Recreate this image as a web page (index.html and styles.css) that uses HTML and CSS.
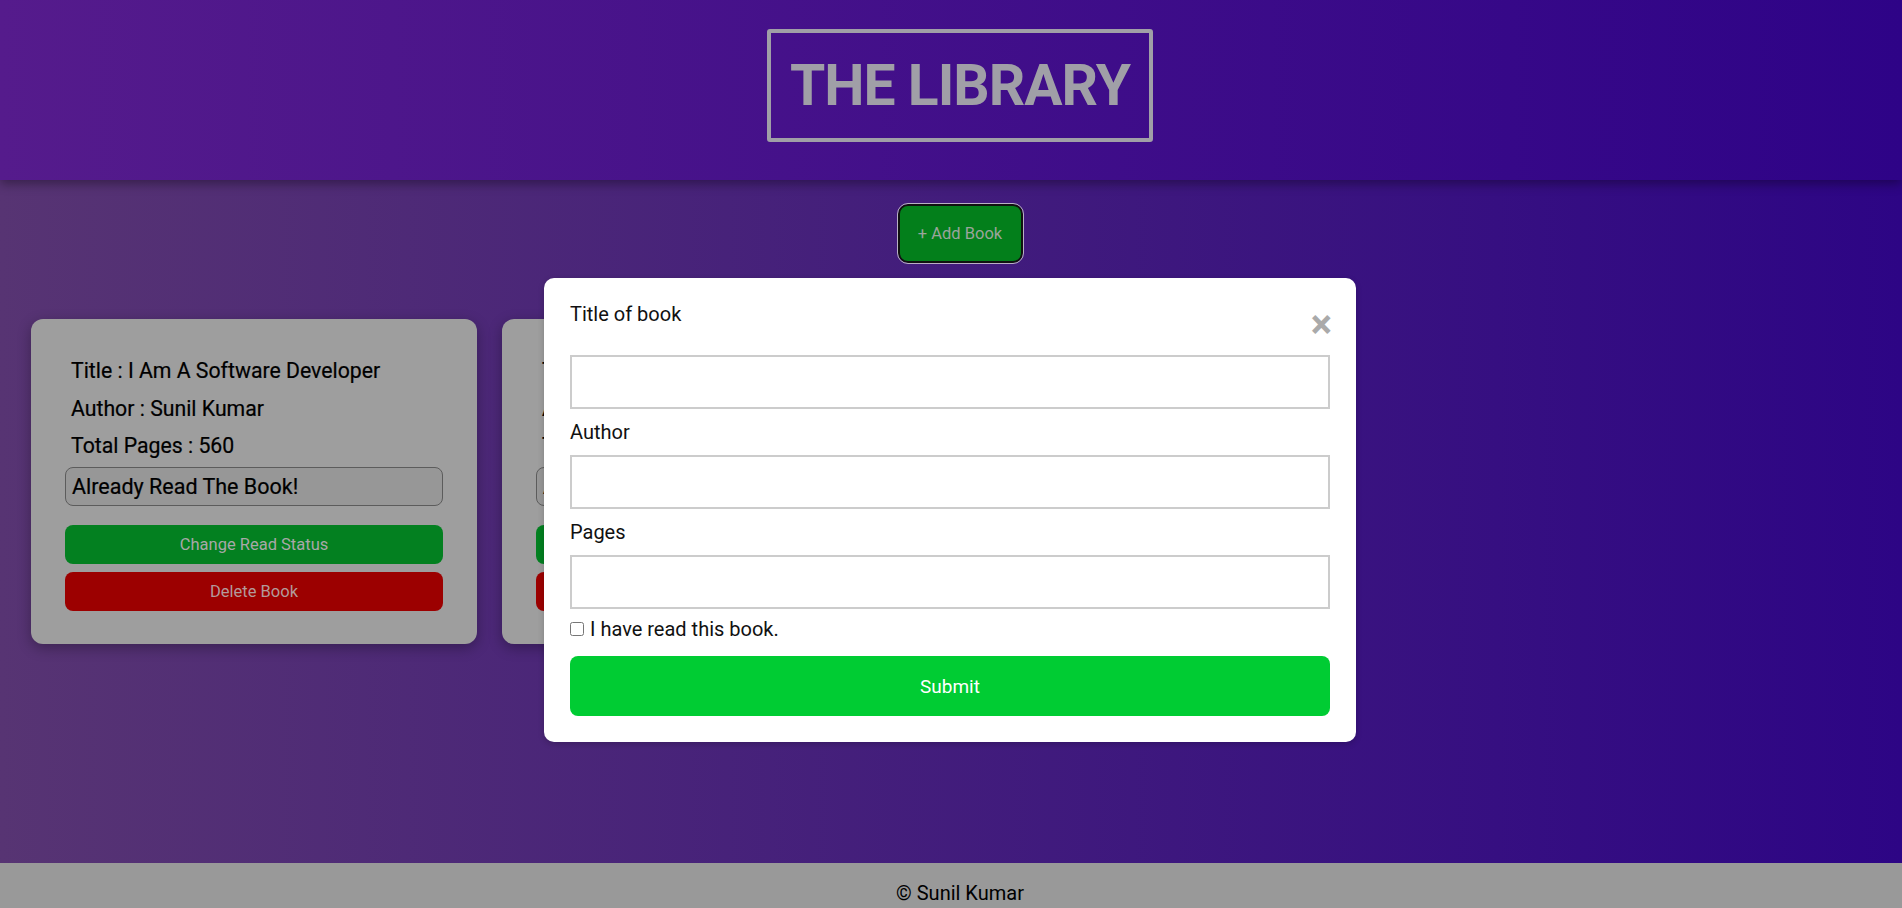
FILE: index.html
```html
<!DOCTYPE html>
<html lang="en">
<head>
<meta charset="utf-8">
<title>The Library</title>
<link rel="stylesheet" href="styles.css">
</head>
<body>
<header class="site-header">
  <h1 class="brand">THE LIBRARY</h1>
</header>
<main class="main">
  <div class="toolbar">
    <button class="add-btn">+ Add Book</button>
  </div>
  <section class="shelf">
    <article class="card">
      <p class="line">Title : I Am A Software Developer</p>
      <p class="line">Author : Sunil Kumar</p>
      <p class="line">Total Pages : 560</p>
      <div class="status">Already Read The Book!</div>
      <button class="btn btn-green">Change Read Status</button>
      <button class="btn btn-red">Delete Book</button>
    </article>
    <article class="card">
      <p class="line">Title : I Am A Software Developer</p>
      <p class="line">Author : Sunil Kumar</p>
      <p class="line">Total Pages : 560</p>
      <div class="status">Already Read The Book!</div>
      <button class="btn btn-green">Change Read Status</button>
      <button class="btn btn-red">Delete Book</button>
    </article>
  </section>
  <form class="modal">
    <div class="modal-head">
      <label class="field-label">Title of book</label>
      <span class="close">&times;</span>
    </div>
    <input class="field" type="text">
    <label class="field-label gap">Author</label>
    <input class="field" type="text">
    <label class="field-label gap">Pages</label>
    <input class="field" type="text">
    <label class="check-row"><input type="checkbox" class="check"> I have read this book.</label>
    <button type="button" class="submit">Submit</button>
  </form>
</main>
<footer class="site-footer">© Sunil Kumar</footer>
</body>
</html>
```

FILE: styles.css
```css
* { box-sizing: border-box; }
html, body { margin: 0; padding: 0; }
body {
  font-family: Roboto, "Liberation Sans", sans-serif;
  color: #000;
  background: #999;
}
.site-header {
  position: relative;
  z-index: 2;
  height: 180px;
  display: flex;
  align-items: flex-start;
  justify-content: center;
  padding-top: 29px;
  padding-left: 18px;
  background: linear-gradient(to right, #551b8c, #2e0387);
  box-shadow: 0 4px 10px rgba(0, 0, 0, 0.35);
}
.brand {
  margin: 0;
  width: 386px;
  height: 113px;
  border: 4px solid #a09fa7;
  border-radius: 3px;
  display: flex;
  align-items: center;
  justify-content: center;
  font-size: 57px;
  font-weight: 700;
  letter-spacing: -1px;
  color: #a09fa7;
}
.main {
  position: relative;
  height: 683px;
  background: linear-gradient(to right, #573473, #2d0585);
  padding-top: 24px;
}
.toolbar {
  display: flex;
  justify-content: center;
  padding-left: 18px;
}
.add-btn {
  width: 125px;
  height: 59px;
  background: #037f1b;
  border: 2px solid #111;
  outline: 1px solid #b9b0c4;
  border-radius: 10px;
  color: #9aa59b;
  font-family: Roboto, sans-serif;
  font-size: 16.5px;
}
.shelf {
  display: flex;
  gap: 25px;
  padding-left: 31px;
  margin-top: 56px;
}
.card {
  width: 446px;
  background: #9e9e9e;
  border-radius: 12px;
  padding: 33px 34px;
  box-shadow: 0 4px 14px rgba(0, 0, 0, 0.3);
  display: flex;
  flex-direction: column;
}
.line {
  margin: 0;
  padding-left: 6px;
  font-size: 21.25px;
  line-height: 37.5px;
  color: #000;
  -webkit-text-stroke: 0.2px #000;
}
.status {
  margin-top: 2px;
  height: 39px;
  border: 1px solid #5c5c5c;
  border-radius: 8px;
  padding-left: 6px;
  display: flex;
  align-items: center;
  font-size: 21.5px;
  background: #979797;
  color: #000;
  -webkit-text-stroke: 0.2px #000;
}
.btn {
  height: 39px;
  border: 0;
  border-radius: 8px;
  font-family: Roboto, sans-serif;
  font-size: 16.5px;
  color: #a8a8a8;
}
.btn-green { background: #038020; margin-top: 19px; }
.btn-red { background: #9c0000; margin-top: 8px; color: #b39a9a; }
.modal {
  position: absolute;
  z-index: 3;
  top: 98px;
  left: 50%;
  margin-left: -1px;
  transform: translateX(-50%);
  width: 812px;
  background: #fff;
  border-radius: 10px;
  padding: 22px 26px 26px;
  display: flex;
  flex-direction: column;
  box-shadow: 0 2px 6px rgba(0, 0, 0, 0.2);
}
.modal-head {
  display: flex;
  justify-content: space-between;
  align-items: flex-start;
  height: 55px;
}
.field-label {
  font-size: 20px;
  line-height: 28px;
  color: #111;
}
.field-label.gap { padding: 9px 0; }
.close {
  margin-top: 8px;
  margin-right: -2px;
  font-size: 40px;
  line-height: 34px;
  font-weight: 700;
  color: #aaa;
}
.field {
  width: 100%;
  height: 54px;
  border: 2px solid #ccc;
  background: #fff;
}
.check-row {
  margin-top: 6px;
  height: 28px;
  display: flex;
  align-items: center;
  gap: 6px;
  font-size: 20px;
  color: #111;
}
.check {
  margin: 0;
  width: 14px;
  height: 14px;
}
.submit {
  margin-top: 13px;
  height: 60px;
  border: 0;
  border-radius: 8px;
  background: #00cc33;
  color: #fff;
  font-family: Roboto, sans-serif;
  font-size: 19px;
}
.site-footer {
  background: #999;
  padding: 20px 0 30px 18px;
  text-align: center;
  font-size: 20px;
  line-height: 20px;
}
```
